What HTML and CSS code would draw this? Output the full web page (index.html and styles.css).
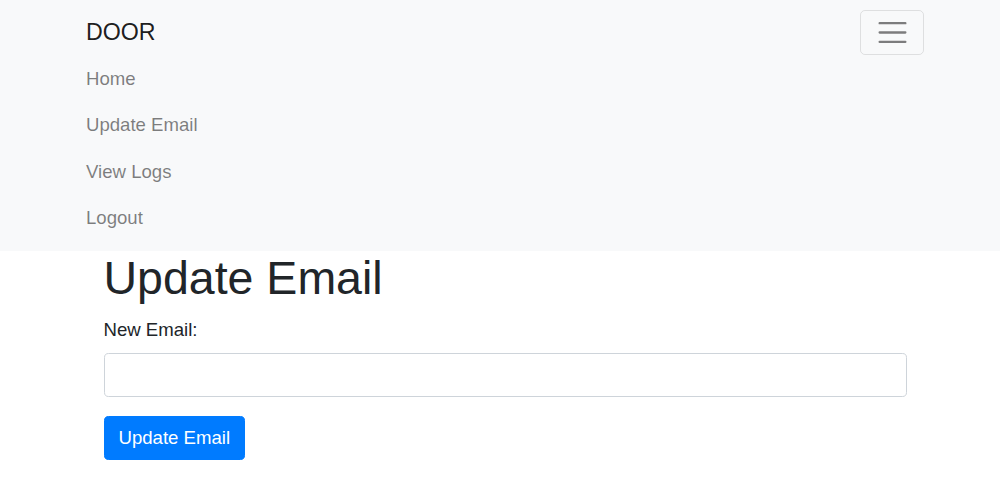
FILE: index.html
```html
<!DOCTYPE html>
<html lang="en">
<head>
<meta charset="utf-8">
<title>Update Email</title>
<link rel="stylesheet" href="styles.css">
</head>
<body>
<nav class="navbar">
  <div class="nav-container">
    <div class="nav-top">
      <a class="brand" href="#">DOOR</a>
      <button class="toggler" type="button" aria-label="Toggle navigation">
        <svg class="toggler-icon" viewBox="0 0 30 30" width="35" height="35" aria-hidden="true">
          <path d="M4 7h22M4 15h22M4 23h22" stroke="rgba(0,0,0,0.5)" stroke-width="2" stroke-linecap="round" fill="none"/>
        </svg>
      </button>
    </div>
    <ul class="nav-list">
      <li><a class="nav-link" href="#">Home</a></li>
      <li><a class="nav-link" href="#">Update Email</a></li>
      <li><a class="nav-link" href="#">View Logs</a></li>
      <li><a class="nav-link" href="#">Logout</a></li>
    </ul>
  </div>
</nav>
<main class="page">
  <div class="container">
    <h1 class="title">Update Email</h1>
    <form class="form">
      <div class="form-group">
        <label class="label" for="email">New Email:</label>
        <input class="input" type="email" id="email" name="email">
      </div>
      <button class="btn" type="submit">Update Email</button>
    </form>
  </div>
</main>
</body>
</html>
```

FILE: styles.css
```css
html, body {
  margin: 0;
  padding: 0;
}

body {
  font-family: "Liberation Sans", Arial, sans-serif;
  font-size: 18.6px;
  line-height: 1.5;
  color: #212529;
  background: #ffffff;
}

.navbar {
  background: #f8f9fa;
  padding: 9.3px 18.6px 9.3px 28.6px;
}

.nav-container {
  width: 838px;
  margin: 0 auto;
}

.nav-top {
  display: flex;
  align-items: center;
  justify-content: space-between;
}

.brand {
  display: inline-block;
  font-size: 23.2px;
  line-height: 34.8px;
  padding: 5.8px 0;
  color: rgba(0, 0, 0, 0.9);
  text-decoration: none;
}

.toggler {
  box-sizing: border-box;
  width: 64px;
  height: 45px;
  padding: 0;
  display: flex;
  align-items: center;
  justify-content: center;
  background: transparent;
  border: 1px solid rgba(0, 0, 0, 0.1);
  border-radius: 5px;
}

.toggler-icon {
  display: block;
}

.nav-list {
  list-style: none;
  margin: 0;
  padding: 0;
}

.nav-link {
  display: block;
  padding: 9.3px 0;
  line-height: 27.8px;
  color: rgba(0, 0, 0, 0.5);
  text-decoration: none;
}

.page {
  padding-left: 10px;
}

.container {
  width: 803px;
  margin: 0 auto;
}

.title {
  margin: 0 0 9.3px;
  font-size: 46.5px;
  font-weight: 400;
  line-height: 55.8px;
}

.form-group {
  margin-bottom: 18.6px;
}

.label {
  display: inline-block;
  margin-bottom: 9.3px;
  line-height: 27.9px;
}

.input {
  display: block;
  box-sizing: border-box;
  width: 100%;
  height: 44.2px;
  padding: 7px 14px;
  font: inherit;
  color: #495057;
  background: #ffffff;
  border: 1px solid #ced4da;
  border-radius: 4.6px;
}

.btn {
  display: inline-block;
  box-sizing: border-box;
  height: 44.2px;
  padding: 7px 14px;
  font: inherit;
  line-height: 27.9px;
  color: #ffffff;
  background: #007bff;
  border: 1px solid #007bff;
  border-radius: 4.6px;
}
```
